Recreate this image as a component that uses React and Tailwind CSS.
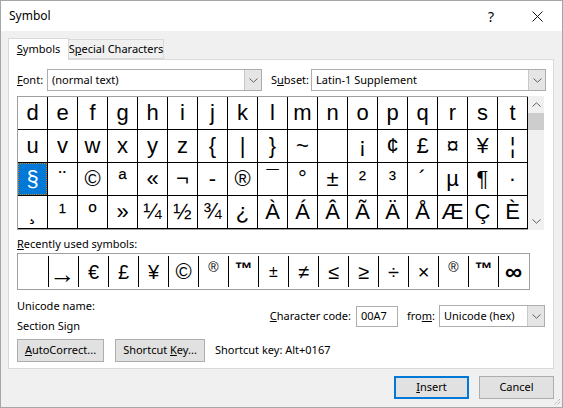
import React from "react";

const ui = { fontFamily: '"Segoe UI", "Noto Sans", sans-serif' };
const sym = { fontFamily: '"Liberation Sans", Arial, sans-serif' };

const rows = [
  ["d", "e", "f", "g", "h", "i", "j", "k", "l", "m", "n", "o", "p", "q", "r", "s", "t"],
  ["u", "v", "w", "x", "y", "z", "{", "|", "}", "~", "", "¡", "¢", "£", "¤", "¥", "¦"],
  ["§", "¨", "©", "ª", "«", "¬", "-", "®", "¯", "°", "±", "²", "³", "´", "µ", "¶", "·"],
  ["¸", "¹", "º", "»", "¼", "½", "¾", "¿", "À", "Á", "Â", "Ã", "Ä", "Å", "Æ", "Ç", "È"],
];

// some glyphs in the recent list come from other fonts, so size them by hand
const recent = [
  { c: "" },
  { c: "→", cls: "text-[26px] pt-[4px] pr-[2px]" },
  { c: "€" },
  { c: "£" },
  { c: "¥" },
  { c: "©", cls: "text-[22px]" },
  { c: "®", cls: "text-[14px] pb-[10px]" },
  { c: "™", cls: "text-[18px] font-bold pb-[6px]" },
  { c: "±", cls: "underline decoration-1 underline-offset-[-1px]" },
  { c: "≠" },
  { c: "≤" },
  { c: "≥" },
  { c: "÷" },
  { c: "×" },
  { c: "®", cls: "text-[14px] pb-[10px]" },
  { c: "™", cls: "text-[18px] font-bold pb-[6px]" },
  { c: "∞", cls: "text-[24px] font-bold" },
];

function Chevron({ up }) {
  return (
    <svg width="9" height="5" viewBox="0 0 9 5" className="block">
      <path d={up ? "M0.5 4.5 L4.5 0.8 L8.5 4.5" : "M0.5 0.5 L4.5 4.2 L8.5 0.5"} fill="none" stroke="#606060" strokeWidth="1" />
    </svg>
  );
}

function Dropdown({ value, width }) {
  return (
    <div className={`flex h-[22px] border border-[#adadad] bg-white ${width}`}>
      <div className="flex-1 flex items-center pl-[4px] text-[11px] text-black whitespace-nowrap">{value}</div>
      <div className="w-[17px] flex items-center justify-center bg-[#e5e5e5] border-l border-[#c8c8c8]">
        <Chevron />
      </div>
    </div>
  );
}

function Btn({ children, w, primary }) {
  return (
    <div
      className={`${w} h-[23px] flex items-center justify-center text-[11px] text-black bg-[#e1e1e1] whitespace-nowrap ${
        primary ? "border-2 border-[#0078d7]" : "border border-[#adadad]"
      }`}
    >
      {children}
    </div>
  );
}

export default function App() {
  return (
    <div style={ui} className="w-[563px] h-[408px] border border-[#a6a6a6] bg-[#f0f0f0] flex flex-col text-black">
      {/* title bar */}
      <div className="h-[30px] bg-white flex items-center pl-[8px] shrink-0">
        <span className="text-[12px]">Symbol</span>
        <span className="ml-auto text-[14px] w-[12px] text-center mr-[35px]">?</span>
        <svg width="11" height="11" viewBox="0 0 11 11" className="mr-[19px]">
          <path d="M0.5 0.5 L10.5 10.5 M10.5 0.5 L0.5 10.5" stroke="#111" strokeWidth="1" />
        </svg>
      </div>

      <div className="flex-1 pl-[7px] pt-[6px] relative">
        {/* tabs */}
        <div className="flex items-end h-[22px] whitespace-nowrap">
          <div className="relative z-10 w-[61px] h-[22px] -mb-px bg-white border border-b-0 border-[#d9d9d9] flex items-center justify-center text-[11px]">
            <span>
              <span className="underline">S</span>ymbols
            </span>
          </div>
          <div className="w-[95px] h-[20px] bg-[#f0f0f0] border border-l-0 border-[#d9d9d9] flex items-center justify-center text-[11px]">
            <span>
              S<span className="underline">p</span>ecial Characters
            </span>
          </div>
        </div>

        {/* panel */}
        <div className="w-[546px] h-[310px] bg-white border border-[#d9d9d9] pl-[8px] pt-[9px]">
          <div className="flex items-center h-[22px] text-[11px]">
            <span className="w-[30px]">
              <span className="underline">F</span>ont:
            </span>
            <Dropdown value="(normal text)" width="w-[215px]" />
            <span className="ml-[9px] w-[40px]">
              S<span className="underline">u</span>bset:
            </span>
            <Dropdown value="Latin-1 Supplement" width="w-[235px]" />
          </div>

          {/* symbol grid */}
          <div className="flex mt-[5px] w-[529px]">
            <div className="border-l border-t border-b border-[#a0a0a0] flex flex-col" style={sym}>
              {rows.map((r, ri) => (
                <div key={ri} className="flex">
                  {r.map((c, ci) => {
                    const sel = ri === 2 && ci === 0;
                    return (
                      <div
                        key={ci}
                        className={`w-[30px] h-[33px] border-r border-b border-black flex items-center justify-center text-[22px] leading-none ${
                          sel ? "bg-[#0078d7] text-white" : "text-black"
                        }`}
                      >
                        {sel ? (
                          <div className="w-full h-full border border-dotted border-[#d08000] flex items-center justify-center">
                            {c}
                          </div>
                        ) : (
                          c
                        )}
                      </div>
                    );
                  })}
                </div>
              ))}
            </div>
            <div className="w-[16px] bg-[#f0f0f0] flex flex-col items-center">
              <div className="h-[17px] flex items-center justify-center">
                <Chevron up />
              </div>
              <div className="w-[16px] h-[17px] bg-[#cdcdcd]" />
              <div className="flex-1" />
              <div className="h-[17px] flex items-center justify-center">
                <Chevron />
              </div>
            </div>
          </div>

          <div className="mt-[6px] h-[16px] flex items-center text-[11px]">
            <span>
              <span className="underline">R</span>ecently used symbols:
            </span>
          </div>

          <div className="mt-[1px] w-[513px] border border-[#a0a0a0] py-[2px] flex" style={sym}>
            {recent.map((r, i) => (
              <div
                key={i}
                className={`${i === 0 ? "w-[30px]" : "w-[30px] border-l border-black"} h-[31px] flex items-center justify-center leading-none ${
                  r.cls || "text-[20px]"
                }`}
              >
                {r.c}
              </div>
            ))}
          </div>

          {/* unicode name / char code */}
          <div className="flex mt-[7px] text-[11px]">
            <div className="flex flex-col">
              <span className="h-[17px] leading-[17px]">Unicode name:</span>
              <span className="h-[19px] leading-[19px] mt-[2px]">Section Sign</span>
            </div>
            <div className="ml-auto mr-[8px] flex items-center self-start mt-[8px]">
              <span>
                <span className="underline">C</span>haracter code:
              </span>
              <div className="ml-[5px] w-[42px] h-[21px] border border-[#adadad] flex items-center pl-[4px]">00A7</div>
              <span className="ml-[9px]">
                fro<span className="underline">m</span>:
              </span>
              <div className="ml-[4px]">
                <Dropdown value="Unicode (hex)" width="w-[106px]" />
              </div>
            </div>
          </div>

          <div className="flex items-center mt-[4px] text-[11px]">
            <Btn w="w-[87px]">
              <span>
                <span className="underline">A</span>utoCorrect...
              </span>
            </Btn>
            <div className="ml-[11px]">
              <Btn w="w-[90px]">
                <span>
                  Shortcut <span className="underline">K</span>ey...
                </span>
              </Btn>
            </div>
            <span className="ml-[10px]">Shortcut key: Alt+0167</span>
          </div>
        </div>

        <div className="flex justify-end gap-[10px] pr-[8px] mt-[7px]">
          <Btn w="w-[75px]" primary>
            <span>
              <span className="underline">I</span>nsert
            </span>
          </Btn>
          <Btn w="w-[75px]">Cancel</Btn>
        </div>

        <svg width="8" height="8" viewBox="0 0 8 8" className="absolute right-[1px] bottom-[1px]">
          <path d="M7 1 L1 7 M7 4 L4 7 M7 7 L7 7" stroke="#a0a0a0" strokeWidth="1" strokeDasharray="1 1" />
        </svg>
      </div>
    </div>
  );
}
